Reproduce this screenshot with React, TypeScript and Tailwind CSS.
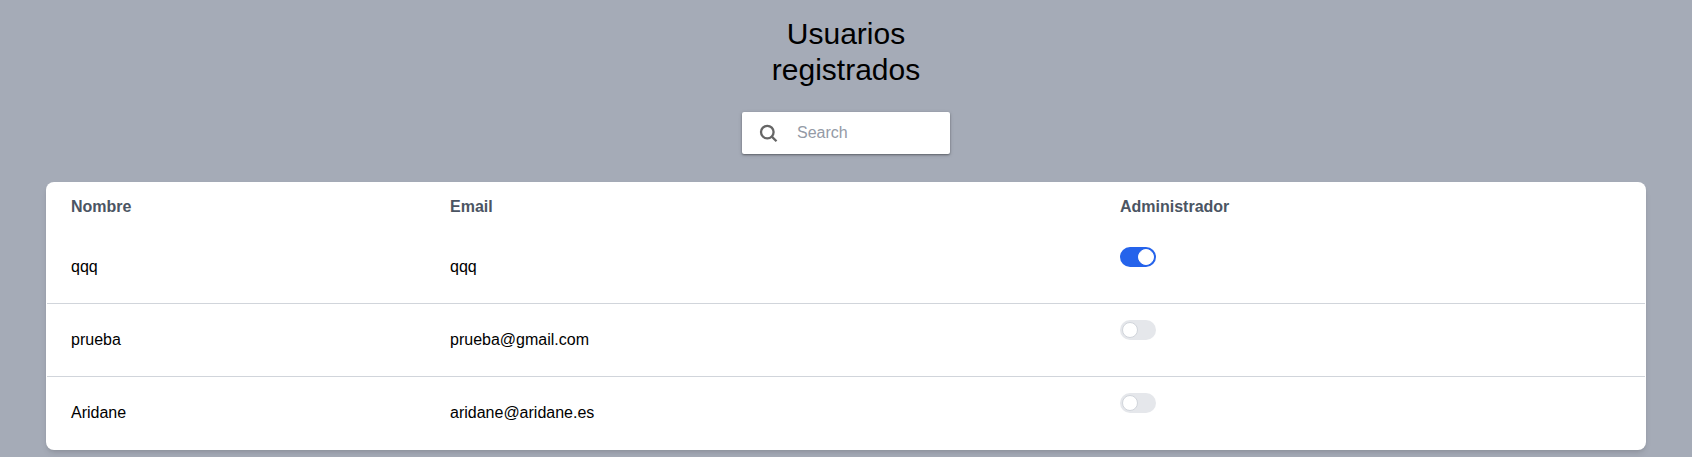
type User = { name: string; email: string; admin: boolean };

const users: User[] = [
  { name: "qqq", email: "qqq", admin: true },
  { name: "prueba", email: "prueba@gmail.com", admin: false },
  { name: "Aridane", email: "aridane@aridane.es", admin: false },
];

function SearchBar() {
  return (
    <div className="mt-6 flex h-[42px] w-52 items-center rounded-xs bg-white pl-[15px] shadow-[0_1px_2px_rgba(0,0,0,0.35),0_1px_4px_rgba(0,0,0,0.15)]">
      <svg
        className="size-6 shrink-0 fill-none stroke-[#666666] stroke-[2.3]"
        viewBox="0 0 24 24"
      >
        <circle cx="10.3" cy="11.1" r="6.3" />
        <path d="M14.8 15.6 L19.5 20.3" />
      </svg>
      <input
        className="ml-4 w-36 bg-transparent text-base outline-none placeholder:text-[#949aa6]"
        placeholder="Search"
      />
    </div>
  );
}

function Toggle({ checked }: { checked: boolean }) {
  return (
    <button
      role="switch"
      aria-checked={checked}
      aria-label="Administrador"
      className={
        checked
          ? "flex h-5 w-9 items-center justify-end rounded-full bg-[#2563eb] px-0.5"
          : "flex h-5 w-9 items-center justify-start rounded-full bg-[#e5e7eb] px-0.5"
      }
    >
      <span
        className={
          checked
            ? "size-4 rounded-full border border-white bg-white"
            : "size-4 rounded-full border border-[#d1d5db] bg-white"
        }
      />
    </button>
  );
}

export default function App() {
  return (
    <main className="flex h-[457px] flex-col items-center bg-[#a5abb7] pt-4 font-['Liberation_Sans',Arial,sans-serif] text-base text-black">
      <h1 className="w-52 text-center text-3xl">Usuarios registrados</h1>
      <SearchBar />
      <section className="mt-7 h-[268px] w-[1600px] rounded-lg bg-white p-px shadow-md">
        <div className="grid h-12 grid-cols-[379px_670px_1fr] items-center pl-6 font-bold text-[#4b5563]">
          <span>Nombre</span>
          <span>Email</span>
          <span>Administrador</span>
        </div>
        {users.map((user) => (
          <div
            key={user.name}
            className="grid h-[73px] grid-cols-[379px_670px_1fr] items-center border-b border-[#d1d5db] pl-6 last:border-transparent"
          >
            <span>{user.name}</span>
            <span>{user.email}</span>
            <div className="self-start pt-4">
              <Toggle checked={user.admin} />
            </div>
          </div>
        ))}
      </section>
    </main>
  );
}
